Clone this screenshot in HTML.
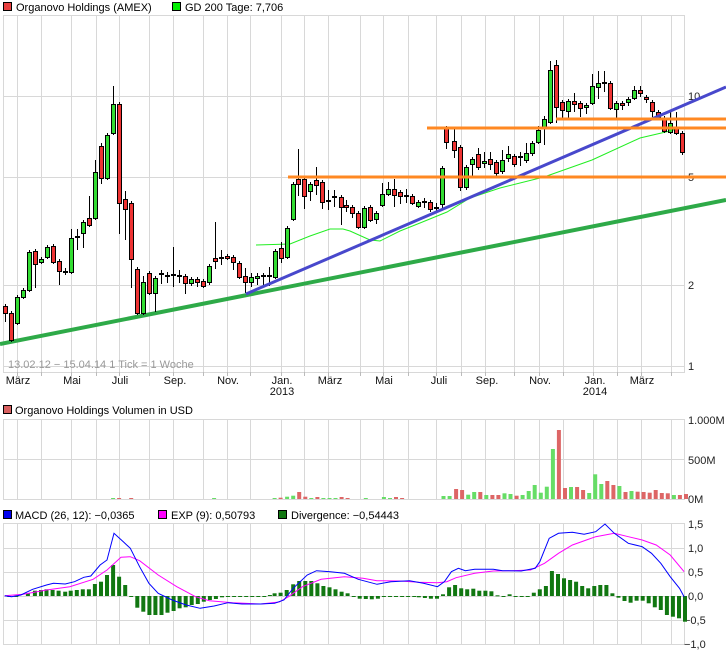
<!DOCTYPE html>
<html><head><meta charset="utf-8"><style>
html,body{margin:0;padding:0;background:#fff;}
svg{display:block;font-family:"Liberation Sans",sans-serif;font-size:11px;}
</style></head><body>
<svg id="s" width="726" height="652" xmlns="http://www.w3.org/2000/svg">
<rect width="726" height="652" fill="#fff"/>
<g id="grid"></g>
<rect x="3.5" y="2.5" width="8" height="8" fill="#e84040" stroke="#000"/>
<text x="16" y="11" fill="#000">Organovo Holdings (AMEX)</text>
<rect x="172.5" y="2.5" width="8" height="8" fill="#00ee00" stroke="#000"/>
<text x="185" y="11" fill="#000">GD 200 Tage: 7,706</text>
<rect x="3.5" y="405.5" width="8" height="8" fill="#d86060" stroke="#000"/>
<text x="15" y="414" fill="#000">Organovo Holdings Volumen in USD</text>
<rect x="3.5" y="510.5" width="8" height="8" fill="#0000ee" stroke="#000"/>
<text x="15" y="519" fill="#000">MACD (26, 12): −0,0365</text>
<rect x="158.5" y="510.5" width="8" height="8" fill="#ff00ff" stroke="#000"/>
<text x="171" y="519" fill="#000">EXP (9): 0,50793</text>
<rect x="278.5" y="510.5" width="8" height="8" fill="#117711" stroke="#000"/>
<text x="291" y="519" fill="#000">Divergence: −0,54443</text>
<g fill="#222">
<text x="688" y="100">10</text><text x="688" y="181">5</text><text x="688" y="289">2</text><text x="688" y="370">1</text>
<text x="688" y="424">1.000M</text><text x="688" y="464">500M</text><text x="688" y="503">0M</text>
<text x="688" y="528">1,5</text><text x="688" y="552">1,0</text><text x="688" y="576">0,5</text><text x="688" y="600">0,0</text><text x="684" y="624">−0,5</text><text x="684" y="648">−1,0</text>
</g>
<text x="8" y="368" fill="#999">13.02.12 − 15.04.14   1 Tick = 1 Woche</text>
<g fill="#111" text-anchor="middle">
<text x="18" y="384">März</text><text x="72" y="384">Mai</text><text x="120" y="384">Juli</text><text x="175" y="384">Sep.</text><text x="228" y="384">Nov.</text><text x="282" y="384">Jan.</text><text x="282" y="395">2013</text>
<text x="330" y="384">März</text><text x="384" y="384">Mai</text><text x="439" y="384">Juli</text><text x="487" y="384">Sep.</text><text x="540" y="384">Nov.</text><text x="595" y="384">Jan.</text><text x="595" y="395">2014</text><text x="642" y="384">März</text>
</g>
<g id="main"></g>
</svg>
<script>
var S='';
var gx=[17,41,71,96,119,149,173,203,227,250,281,304,328,360,383,408,436,461,485,514,539,563,593,617,641,671];
var G='';
function panel(t,b,hs){
 G+='<rect x="3.5" y="'+t+'.5" width="681" height="'+(b-t)+'" fill="none" stroke="#d8d8d8"/>';
 gx.forEach(function(x){G+='<line x1="'+x+'.5" y1="'+t+'" x2="'+x+'.5" y2="'+b+'" stroke="#d8d8d8"/>';});
 hs.forEach(function(y){G+='<line x1="3" y1="'+y+'.5" x2="684" y2="'+y+'.5" stroke="#d8d8d8"/>';});
}
panel(15,372,[96,177,285,366]);
gx.forEach(function(x){G+='<line x1="'+x+'.5" y1="372" x2="'+x+'.5" y2="376" stroke="#bbb"/>';});
panel(419,499,[459]);
panel(523,644,[548,572,596,620]);
document.getElementById('grid').innerHTML=G;

S+='<line x1="0" y1="344" x2="726" y2="200" stroke="#2eaa48" stroke-width="4"/>';
S+='<polyline fill="none" stroke="#22ee22" stroke-width="1" points="256,245 290,244 310,236 330,229 343,229 350,231 370,240 380,241 400,231 420,223 447,212 470,198 500,188 544,177 592,160 640,138 670,131 683,127"/>';

var C=[[5,306,313,'r',304,322],[11,313,340,'r',311,342],[17,297,323,'g',295,325],[23,290,297,'g',288,299],[29,252,290,'g',250,292],[35,251,264,'r',249,288],[41,259,262,'g',257,264],[47,247,257,'g',245,259],[53,246,262,'r',244,264],[59,261,271,'r',259,285],[65,271,273,'d',268,275],[71,238,272,'g',229,274],[77,236,238,'d',229,250],[83,222,233,'g',220,248],[89,218,225,'r',196,227],[95,172,218,'g',160,220],[101,146,178,'r',143,184],[107,135,178,'g',133,180],[113,104,133,'g',86,135],[119,104,203,'r',102,234],[125,199,209,'r',191,240],[131,203,259,'r',201,288],[137,269,313,'r',267,315],[143,282,313,'g',276,315],[149,273,293,'r',271,295],[155,278,293,'g',276,312],[161,273,275,'d',270,284],[167,275,277,'d',272,283],[173,274,276,'d',247,287],[179,275,277,'d',270,283],[185,276,283,'r',274,294],[191,279,283,'g',277,286],[197,279,282,'r',277,287],[203,281,286,'r',279,288],[209,266,282,'g',264,285],[215,258,261,'r',222,269],[221,257,259,'d',250,265],[227,256,258,'r',254,260],[233,257,262,'r',255,270],[239,263,277,'r',261,279],[245,276,282,'r',268,293],[251,277,282,'g',273,287],[257,276,278,'g',273,285],[263,275,277,'d',273,285],[269,275,277,'d',267,286],[275,251,277,'g',249,279],[281,248,258,'r',242,263],[287,228,257,'g',226,259],[293,184,219,'g',182,221],[298,179,184,'r',149,196],[304,179,196,'r',177,209],[310,184,191,'g',182,201],[316,180,185,'r',167,195],[322,182,202,'r',180,209],[328,200,202,'d',190,210],[334,196,198,'d',190,207],[341,197,207,'r',195,225],[346,205,207,'r',200,212],[352,207,213,'r',205,218],[358,213,227,'r',211,229],[364,208,227,'g',206,229],[370,207,220,'r',205,222],[376,213,219,'g',211,224],[382,194,205,'g',183,207],[388,189,194,'g',182,196],[394,189,195,'r',179,207],[400,192,196,'r',190,204],[406,195,197,'d',189,203],[412,196,203,'r',194,205],[418,202,206,'g',200,208],[424,201,203,'d',198,208],[430,202,209,'r',200,212],[436,207,209,'d',203,211],[442,168,204,'g',166,210],[446,128,142,'r',126,149],[454,141,150,'r',128,158],[460,147,187,'r',145,191],[466,167,187,'g',165,190],[472,159,164,'g',157,178],[478,154,167,'r',148,170],[484,161,163,'g',152,168],[490,159,164,'r',152,170],[496,162,173,'r',160,176],[502,160,171,'g',150,174],[508,154,158,'g',146,162],[514,156,164,'r',154,167],[520,156,158,'d',152,166],[526,153,160,'g',143,163],[532,143,153,'g',141,156],[538,130,142,'g',126,144],[544,119,127,'g',116,145],[550,70,122,'g',61,124],[556,65,107,'r',60,123],[562,102,110,'r',100,118],[568,101,111,'g',99,119],[574,101,104,'r',93,112],[580,103,108,'r',101,117],[586,105,107,'g',103,114],[592,86,103,'g',74,105],[598,83,87,'g',71,99],[604,82,84,'d',71,92],[610,83,108,'r',81,110],[616,103,109,'g',101,118],[622,103,105,'r',101,110],[628,99,102,'g',97,106],[634,90,98,'g',86,100],[640,90,93,'r',86,97],[646,97,99,'r',95,103],[652,102,111,'r',100,117],[658,112,117,'r',110,120],[664,118,131,'r',116,133],[670,123,132,'g',112,134],[676,127,133,'r',112,135],[682,133,152,'r',131,155]];
C.forEach(function(c){
 var x=c[0];
 S+='<line x1="'+(x+0.5)+'" y1="'+c[4]+'" x2="'+(x+0.5)+'" y2="'+c[5]+'" stroke="#000"/>';
 if(c[3]=='d'){S+='<rect x="'+(x-2)+'" y="'+c[1]+'" width="5" height="2" fill="#000"/>';}
 else{S+='<rect x="'+(x-1.5)+'" y="'+(c[1]+0.5)+'" width="4" height="'+Math.max(1,c[2]-c[1])+'" fill="'+(c[3]=='g'?'#33dd33':'#ee3333')+'" stroke="#000"/>';}
});
S+='<line x1="246" y1="294" x2="726" y2="87" stroke="#4848cc" stroke-width="3"/>';
S+='<line x1="288" y1="177" x2="726" y2="177" stroke="#ff8822" stroke-width="3"/>';
S+='<line x1="427" y1="128" x2="726" y2="128" stroke="#ff8822" stroke-width="3"/>';
S+='<line x1="556" y1="119" x2="726" y2="119" stroke="#ff8822" stroke-width="3"/>';

var k=726/1560;
var V=[[243,474,'g'],[256,474,'r'],[282,474,'r'],[460,474,'g'],[590,474,'g'],[603,473,'r'],[617,470,'g'],[630,467,'g'],[643,456,'r'],[656,470,'r'],[669,474,'g'],[682,471,'r'],[695,474,'g'],[708,474,'g'],[721,474,'g'],[734,471,'r'],[747,474,'r'],[786,474,'g'],[825,471,'g'],[838,474,'g'],[851,471,'r'],[864,474,'r'],[953,468,'g'],[966,468,'g'],[980,447,'r'],[993,450,'r'],[1006,464,'g'],[1019,456,'g'],[1032,456,'r'],[1045,465,'g'],[1058,465,'r'],[1071,465,'r'],[1084,460,'g'],[1097,462,'g'],[1110,467,'r'],[1123,465,'g'],[1136,453,'g'],[1149,435,'g'],[1162,458,'g'],[1175,440,'g'],[1188,327,'g'],[1201,270,'r'],[1214,444,'r'],[1227,441,'g'],[1240,441,'r'],[1253,450,'r'],[1266,459,'g'],[1279,403,'g'],[1292,432,'g'],[1305,423,'r'],[1318,435,'r'],[1331,438,'g'],[1344,456,'r'],[1357,453,'g'],[1370,455,'r'],[1383,456,'r'],[1396,458,'r'],[1409,450,'r'],[1422,459,'r'],[1435,460,'r'],[1448,465,'g'],[1461,465,'r'],[1474,462,'r']];
V.forEach(function(v){var x=v[0]*k,y=340+v[1]/3;S+='<rect x="'+(x-2).toFixed(1)+'" y="'+y.toFixed(1)+'" width="4" height="'+(499-y).toFixed(1)+'" fill="'+(v[2]=='g'?'#66dd66':'#dd6666')+'"/>';});

var D=[[20,288],[35,288],[60,280],[75,272],[88,270],[100,268],[113,270],[126,272],[140,275],[152,272],[165,270],[178,268],[191,268],[204,252],[217,245],[230,225],[243,195],[256,230],[269,255],[282,290],[295,323],[308,335],[321,345],[334,345],[347,345],[360,338],[373,333],[386,325],[399,322],[412,315],[425,312],[438,305],[451,300],[464,297],[477,292],[490,290],[503,289],[516,289],[529,289],[542,289],[555,289],[568,289],[580,285],[590,280],[603,278],[616,270],[630,253],[643,243],[656,243],[669,243],[682,250],[695,258],[708,262],[721,268],[734,275],[747,280],[760,290],[773,296],[786,297],[799,298],[812,296],[825,290],[838,290],[851,290],[864,290],[877,290],[890,290],[900,292],[913,294],[926,296],[939,296],[952,283],[965,262],[978,255],[991,265],[1004,268],[1017,266],[1030,272],[1043,272],[1056,274],[1069,286],[1082,288],[1095,283],[1108,288],[1121,288],[1134,288],[1147,278],[1160,268],[1173,258],[1186,213],[1199,222],[1212,235],[1225,240],[1238,245],[1251,258],[1264,265],[1277,258],[1290,255],[1303,255],[1316,280],[1329,293],[1342,303],[1355,308],[1368,302],[1381,302],[1394,310],[1407,322],[1420,330],[1433,345],[1446,350],[1459,355],[1472,365]];
var z=596;
D.forEach(function(d){var x=d[0]*k,y=500+d[1]/3;var t=Math.min(y,z),h=Math.max(1,Math.abs(y-z));S+='<rect x="'+(x-2).toFixed(1)+'" y="'+t.toFixed(1)+'" width="4" height="'+h.toFixed(1)+'" fill="#117711"/>';});
function pl(a,col){return '<polyline fill="none" stroke="'+col+'" stroke-width="1" points="'+a.map(function(p){return (p[0]*k).toFixed(1)+','+(500+p[1]/3).toFixed(1);}).join(' ')+'"/>';}
var M=[[10,287],[25,290],[45,285],[70,268],[100,255],[115,250],[140,252],[160,245],[180,232],[195,228],[215,195],[230,180],[245,100],[265,125],[280,145],[300,200],[320,250],[340,280],[370,300],[400,315],[430,325],[460,318],[490,308],[520,312],[560,312],[590,310],[610,300],[630,265],[660,225],[680,212],[710,215],[740,220],[770,238],[810,253],[840,245],[880,242],[910,250],[940,260],[955,245],[970,215],[985,205],[1000,212],[1020,208],[1060,208],[1080,212],[1120,213],[1150,205],[1160,185],[1180,115],[1200,100],[1230,97],[1255,103],[1280,95],[1300,72],[1320,100],[1350,130],[1380,140],[1400,160],[1420,190],[1440,230],[1460,265],[1470,290]];
var E=[[10,287],[50,283],[100,270],[150,260],[200,238],[230,210],[260,172],[280,170],[300,182],[340,225],[380,260],[420,290],[450,302],[500,308],[560,312],[600,306],[620,290],[650,260],[690,238],[740,230],[780,235],[810,242],[860,243],[900,247],[940,248],[960,245],[980,233],[1020,220],[1060,213],[1100,212],[1140,210],[1170,190],[1200,160],[1230,135],[1260,120],[1280,110],[1320,100],[1350,110],[1380,120],[1410,135],[1440,165],[1470,215]];
S+=pl(E,'#ff00ff')+pl(M,'#0000ff');
document.getElementById('main').innerHTML=S;
</script>
</body></html>
